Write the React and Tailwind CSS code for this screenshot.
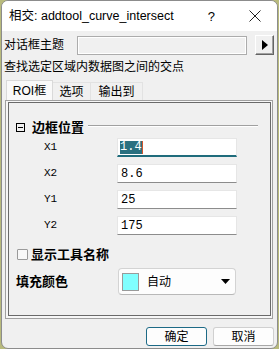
export default function App() {
  const fields = [
    { label: "X1", value: "1.4", focused: true },
    { label: "X2", value: "8.6" },
    { label: "Y1", value: "25" },
    { label: "Y2", value: "175" },
  ];

  return (
    <div className="w-[279px] h-[349px] bg-[#b8ba7c] flex overflow-hidden font-['Liberation_Sans','Noto_Sans_CJK_SC',sans-serif] text-[12px] text-black">
      <div className="ml-px w-[277px] h-[349px] bg-[#f0f0f0] border border-[#8c8c8c] rounded-[7px] overflow-hidden flex flex-col">
        {/* Title bar */}
        <div className="h-[30px] shrink-0 bg-white flex items-center">
          <span className="ml-[7px] text-[12.5px] leading-none">相交: addtool_curve_intersect</span>
          <span className="ml-auto mr-[34px] text-[13px] leading-none">?</span>
          <svg width="12" height="12" viewBox="0 0 12 12" className="mr-[16px]">
            <path d="M0.5 0.5 L11.5 11.5 M11.5 0.5 L0.5 11.5" stroke="#222" strokeWidth="1" />
          </svg>
        </div>

        {/* Dialog theme row */}
        <div className="mt-[4px] h-[20px] flex items-center">
          <span className="pl-[2px] w-[75px] leading-none">对话框主题</span>
          <div className="w-[170px] h-[19px] border border-[#acacac] bg-[#f0f0f0] shadow-[inset_1px_1px_0_#ffffff,inset_-1px_-1px_0_#ffffff]" />
          <div className="ml-[8px] w-[19px] h-[20px] bg-[#f0f0f0] border-t border-l border-white border-r border-b border-r-[#646464] border-b-[#646464] shadow-[inset_-1px_-1px_0_#a0a0a0] flex items-center justify-center">
            <svg width="6" height="10" viewBox="0 0 6 10">
              <path d="M0 0 L6 5 L0 10 Z" fill="#000" />
            </svg>
          </div>
        </div>

        {/* Description */}
        <div className="mt-[4px] h-[16px] leading-[16px] pl-[2px]">查找选定区域内数据图之间的交点</div>

        {/* Tabs */}
        <div className="mt-[5px] ml-[4px] flex items-end h-[20px]">
          <div className="w-[47px] h-[20px] bg-[#f9f9f9] border border-b-0 border-[#d9d9d9] flex items-center justify-center leading-none">ROI框</div>
          <div className="w-[38px] h-[18px] border-t border-r border-[#e2e2e2] flex items-center justify-center leading-none">选项</div>
          <div className="w-[52px] h-[18px] border-t border-r border-[#e2e2e2] flex items-center justify-center leading-none">输出到</div>
        </div>

        {/* Panel */}
        <div className="ml-[3px] w-[268px] h-[219px] border border-[#a0a0a0] bg-[#f7f7f7] pt-px pr-px pl-[2px] pb-[2px]">
          <div className="w-full h-full border border-[#6a6a6a] bg-[#f0f0f0] flex flex-col">
            {/* Section header */}
            <div className="mt-[16px] h-[16px] flex items-center">
              <div className="ml-[7px] w-[9px] h-[9px] border border-black flex items-center justify-center">
                <div className="w-[5px] h-px bg-black" />
              </div>
              <span className="ml-[7px] text-[13px] font-bold leading-none">边框位置</span>
              <div className="ml-[4px] mr-[12px] flex-1 -mt-[3px]">
                <div className="h-px bg-[#a0a0a0]" />
                <div className="h-px bg-white" />
              </div>
            </div>

            {/* Fields */}
            <div className="mt-[3px] flex flex-col gap-[7px]">
              {fields.map((f) => (
                <div key={f.label} className="flex items-center h-[19px]">
                  <span className="ml-[35px] w-[73px] font-['Liberation_Mono',monospace] text-[11px] leading-none">
                    {f.label}
                  </span>
                  <div
                    className={`w-[120px] h-[19px] bg-white border-t border-l border-r border-[#e6e6e6] flex items-center pl-[2px] font-['Liberation_Mono',monospace] text-[12px] leading-none ${
                      f.focused ? "border-b-2 border-b-[#1f6c7c]" : "border-b border-b-[#8c8c8c]"
                    }`}
                  >
                    {f.focused ? (
                      <>
                        <span className="bg-[#2a7080] text-white h-[13px] flex items-center">{f.value}</span>
                        <span className="w-px h-[13px] bg-[#d2542a]" />
                      </>
                    ) : (
                      <span className="pl-px">{f.value}</span>
                    )}
                  </div>
                </div>
              ))}
            </div>

            {/* Checkbox */}
            <div className="mt-[11px] h-[16px] flex items-center">
              <div className="ml-[8px] w-[11px] h-[11px] border border-[#9a9a9a] bg-[#f8f8f8] rounded-[1px]" />
              <span className="ml-[3px] text-[13px] font-bold leading-none">显示工具名称</span>
            </div>

            {/* Fill color */}
            <div className="mt-[6px] flex items-center">
              <span className="ml-[7px] w-[102px] text-[13px] font-bold leading-none">填充颜色</span>
              <div className="w-[118px] h-[27px] bg-[#fdfdfd] border border-[#d3d3d3] border-b-[#b8b8b8] rounded-[4px] flex items-center">
                <div className="ml-[3px] w-[17px] h-[18px] bg-[#80ffff] border border-[#9a9a9a]" />
                <span className="ml-[8px] leading-none">自动</span>
                <svg width="9" height="5" viewBox="0 0 9 5" className="ml-auto mr-[5px]">
                  <path d="M0 0 L9 0 L4.5 5 Z" fill="#000" />
                </svg>
              </div>
            </div>
          </div>
        </div>

        {/* Buttons */}
        <div className="mt-[8px] flex justify-end gap-[6px] mr-[3px]">
          <button className="w-[61px] h-[19px] bg-[#fdfdfd] border border-[#1d6a86] rounded-[3px] leading-none text-[12px]">确定</button>
          <button className="w-[61px] h-[19px] bg-[#fdfdfd] border border-[#d0d0d0] border-b-[#a8a8a8] rounded-[3px] leading-none text-[12px]">取消</button>
        </div>
      </div>
    </div>
  );
}
